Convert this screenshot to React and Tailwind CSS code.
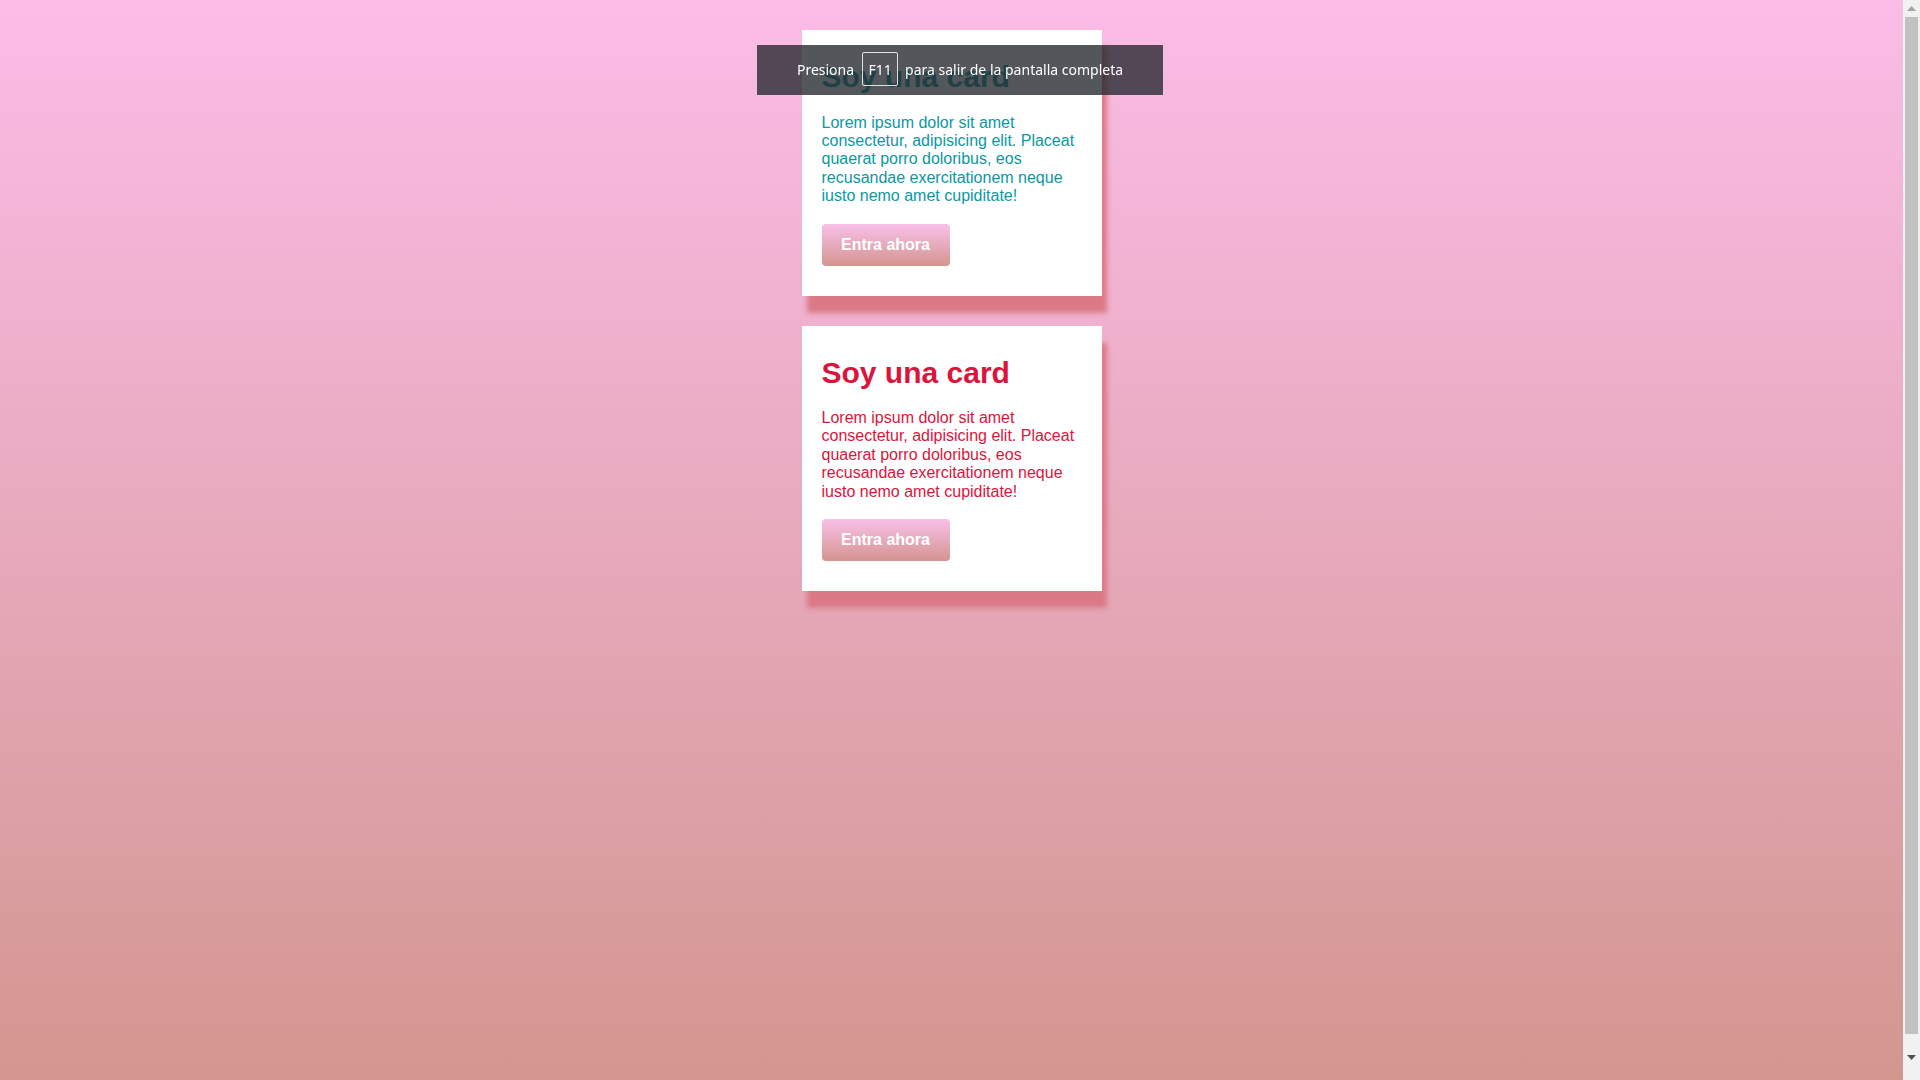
import React from "react";

function Card({ color }) {
  return (
    <div className="w-[300px] bg-white pt-[30px] pb-[30px] px-5 shadow-[5px_17px_5px_#db7a86]">
      <h2
        className="text-[30px] font-bold leading-[34.5px] mb-[19px]"
        style={{ color }}
      >
        Soy una card
      </h2>
      <p className="text-[16px] leading-[18.4px] mb-[18px]" style={{ color }}>
        Lorem ipsum dolor sit amet consectetur, adipisicing elit. Placeat
        quaerat porro doloribus, eos recusandae exercitationem neque iusto nemo
        amet cupiditate!
      </p>
      <button className="w-[128px] h-[42px] rounded-[4px] bg-gradient-to-b from-[#f9c0e9] to-[#d4958f] text-white font-bold text-[16px] leading-[18px]">
        Entra ahora
      </button>
    </div>
  );
}

export default function App() {
  return (
    <div className="flex w-[1920px] h-[1080px] overflow-hidden font-['Liberation_Sans',Arial,sans-serif]">
      <div className="flex-1 h-full bg-gradient-to-b from-[#fbbce8] to-[#d3968f] flex flex-col items-center pt-[30px] gap-[30px]">
        <Card color="#0b98a0" />
        <Card color="#dc143c" />
      </div>
      <div className="w-[17px] h-full bg-[#f1f1f1] flex flex-col items-center">
        <div className="h-[17px] w-full flex items-center justify-center">
          <svg width="9" height="5" viewBox="0 0 9 5">
            <path d="M0 5 L4.5 0 L9 5 Z" fill="#a3a3a3" />
          </svg>
        </div>
        <div className="w-[13px] h-[1017px] bg-[#c1c1c1]" />
        <div className="flex-1 w-full flex items-center justify-center">
          <svg width="9" height="5" viewBox="0 0 9 5">
            <path d="M0 0 L9 0 L4.5 5 Z" fill="#505050" />
          </svg>
        </div>
      </div>
      <div className="fixed top-[45px] left-1/2 -translate-x-1/2 w-[406px] h-[50px] pb-[2px] bg-[rgba(37,41,46,0.79)] flex items-center justify-center text-white text-[14px] font-['Noto_Sans',sans-serif]">
        <span>Presiona</span>
        <span className="ml-[8px] mr-[7px] w-[36px] h-[34px] border border-[#e0e0e0] rounded-[2px] flex items-center justify-center">
          F11
        </span>
        <span>para salir de la pantalla completa</span>
      </div>
    </div>
  );
}
